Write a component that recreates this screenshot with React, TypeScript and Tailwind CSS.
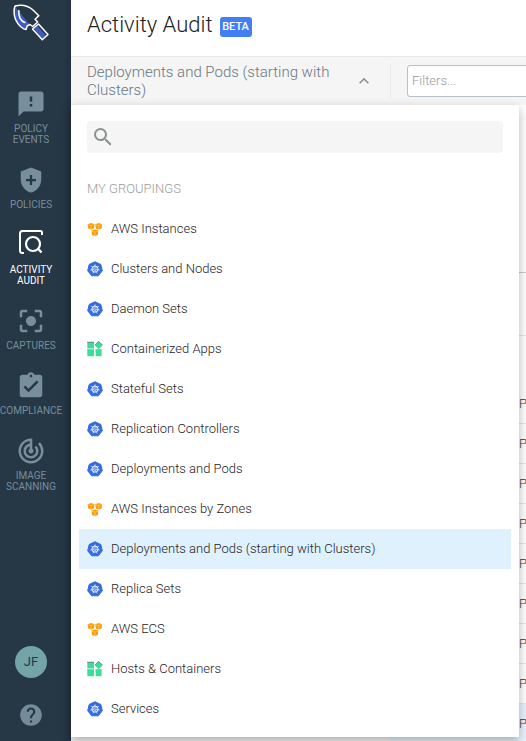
import type { ReactNode } from "react";
import {
  MdSmsFailed,
  MdCenterFocusStrong,
  MdAssignmentTurnedIn,
  MdTrackChanges,
  MdHelp,
  MdSearch,
  MdKeyboardArrowUp,
} from "react-icons/md";

function Shovel() {
  return (
    <svg width="38" height="38" viewBox="0 0 38 38" fill="none">
      <path d="M3 2.500L18 21L15.300 21.700L14 25.500L8.700 23.200L3 16L2 7.700Z" fill="#3f5bc0" />
      <path d="M6.800 6.700C6.600 12.500 8.500 16.800 12.800 18.500" stroke="#fff" strokeWidth="1.600" strokeLinecap="round" />
      <path d="M22 24.500L25 21.500L34 31.500L30.500 35.500Z" fill="#3f5bc0" />
      <path d="M3 2C10 .3 17 2.500 21 6L26.800 11.700L23 15.300L25.700 18L20.700 22.500L18 20.500L15.300 21.700L14 25.500C9 24.500 1 17 2.200 5Z" stroke="#fff" strokeWidth="1.500" strokeLinejoin="round" />
      <path d="M20.500 25L26.500 20L36 30.500L30.300 35.700Z" stroke="#fff" strokeWidth="1.500" strokeLinejoin="round" />
    </svg>
  );
}

function ShieldPlus() {
  return (
    <svg width="30" height="30" viewBox="0 0 24 24">
      <path fill="currentColor" fillRule="evenodd" d="M12 2L3.800 5.200V11.500C3.800 16.500 7.300 20.800 12 22C16.700 20.800 20.200 16.500 20.200 11.500V5.200ZM11.100 8V11.100H8V12.900H11.100V16H12.900V12.900H16V11.100H12.900V8Z" />
    </svg>
  );
}

function AuditIcon() {
  return (
    <svg width="30" height="30" viewBox="0 0 30 30" fill="none" stroke="currentColor" className="-mt-[6px]">
      <path d="M26 8V5.500Q26 4 24.500 4H6.500Q4 4 4 6.500V23.500Q4 26 6.500 26H8" strokeWidth="2" />
      <circle cx="17" cy="17" r="7" strokeWidth="2.200" />
      <path d="M21.800 21.500L25.500 25.500" strokeWidth="2.400" />
    </svg>
  );
}

function Kubernetes() {
  return (
    <svg width="16" height="16" viewBox="0 0 16 16" fill="none">
      <path d="M8 .7L13.800 3.500L15.300 9.700L11.300 14.800H4.700L.7 9.700L2.200 3.500Z" fill="#326ce5" stroke="#326ce5" strokeLinejoin="round" />
      <circle cx="8" cy="8.100" r="3.100" stroke="#fff" strokeWidth=".9" />
      <path d="M8 8.100V3.300M8 8.100L11.800 5.100M8 8.100L12.700 9.200M8 8.100L10.100 12.400M8 8.100L5.900 12.400M8 8.100L3.300 9.200M8 8.100L4.200 5.100" stroke="#fff" strokeWidth=".7" />
      <circle cx="8" cy="8.100" r=".8" fill="#326ce5" />
    </svg>
  );
}

function Cube({ x, y }: { x: number; y: number }) {
  return (
    <g transform={`translate(${x} ${y})`}>
      <path d="M0 1.200L3.500 0L7 1.200L6.300 5.500L3.500 6.400L.7 5.500Z" fill="#f90" />
      <path d="M.3 1.700L3.500 2.500L6.700 1.700M3.500 2.600V6.200" stroke="#ffdca0" strokeWidth=".6" />
    </g>
  );
}

function Aws() {
  return (
    <svg width="16" height="16" viewBox="0 0 16 16" fill="none">
      <Cube x={0.6} y={2} />
      <Cube x={8.2} y={2} />
      <Cube x={4.4} y={8.6} />
    </svg>
  );
}

function Containers() {
  return (
    <svg width="16" height="16" viewBox="0 0 16 16">
      <path fill="#66736e" d="M.3 .8H7V2H.3ZM.3 8.400H7V9.500H.3ZM8.600 8.400H14.600V9.500H8.600ZM7.600 4L11.700 0L15.800 4Z" />
      <path fill="#3ddc97" d="M.3 1.400H7V7.500H.3ZM.3 9H7V15.300H.3ZM8.600 9H14.600V15.300H8.600ZM11.700 .7L15.600 4.400L11.700 8.200L7.800 4.400Z" />
    </svg>
  );
}

const nav: { lines: string[]; icon: ReactNode; active?: boolean }[] = [
  { lines: ["POLICY", "EVENTS"], icon: <MdSmsFailed size={30} /> },
  { lines: ["POLICIES"], icon: <ShieldPlus /> },
  { lines: ["ACTIVITY", "AUDIT"], icon: <AuditIcon />, active: true },
  { lines: ["CAPTURES"], icon: <MdCenterFocusStrong size={30} /> },
  { lines: ["COMPLIANCE"], icon: <MdAssignmentTurnedIn size={30} /> },
  { lines: ["IMAGE", "SCANNING"], icon: <MdTrackChanges size={30} /> },
];

const groupings: [string, ReactNode][] = [
  ["AWS Instances", <Aws />],
  ["Clusters and Nodes", <Kubernetes />],
  ["Daemon Sets", <Kubernetes />],
  ["Containerized Apps", <Containers />],
  ["Stateful Sets", <Kubernetes />],
  ["Replication Controllers", <Kubernetes />],
  ["Deployments and Pods", <Kubernetes />],
  ["AWS Instances by Zones", <Aws />],
  ["Deployments and Pods (starting with Clusters)", <Kubernetes />],
  ["Replica Sets", <Kubernetes />],
  ["AWS ECS", <Aws />],
  ["Hosts & Containers", <Containers />],
  ["Services", <Kubernetes />],
];

const rows = Array.from({ length: 9 }, (_, i) => i);

function Sidebar() {
  return (
    <aside className="flex w-[71px] shrink-0 flex-col bg-linear-to-r from-[#263746] from-90% to-[#20303f] text-[#758b99]">
      <div className="h-[89px] pt-[4px] pl-[12px]"><Shovel /></div>
      <nav className="flex w-[62px] flex-1 flex-col gap-5">
        {nav.map((item) => (
          <div key={item.lines[0]} className={`flex flex-col items-center gap-1 ${item.active ? "text-white" : "text-[#788e9c]"}`}>
            <div className="flex h-[30px] items-center">{item.icon}</div>
            <div className="text-center text-[10px] leading-[11px] font-normal whitespace-nowrap">
              {item.lines.map((line) => <div key={line}>{line}</div>)}
            </div>
          </div>
        ))}
      </nav>
      <div className="flex w-[62px] flex-col items-center gap-[24px] pb-[13px]">
        <div className="flex size-8 items-center justify-center rounded-full bg-[#73a5a8] text-[13px] font-normal text-[#263746]">JF</div>
        <MdHelp size={26} />
      </div>
    </aside>
  );
}

function GroupingMenu() {
  return (
    <div className="absolute top-[105px] left-0 z-10 h-[632px] w-[448px] bg-white px-2 pt-4 shadow-[0_4px_10px_rgba(0,0,0,0.3)]">
      <div className="mx-2 flex h-8 items-center rounded bg-[#f5f5f5] pl-[4px] text-[#8c8f91]">
        <MdSearch size={24} />
      </div>
      <div className="mt-4 flex h-10 items-center px-2 text-[13px] text-[#9c9c9c]">MY GROUPINGS</div>
      <ul>
        {groupings.map(([label, icon]) => (
          <li key={label} className={`flex h-10 items-center gap-2 px-2 text-[13px] text-[#1f2326] ${label.includes("(") ? "bg-[#e0f1fe]" : ""}`}>
            {icon}
            {label}
          </li>
        ))}
      </ul>
    </div>
  );
}

export default function App() {
  return (
    <div className="flex h-[741px] w-[526px] overflow-hidden bg-white font-['Roboto',sans-serif] font-light">
      <Sidebar />
      <main className="relative flex min-w-0 flex-1 flex-col">
        <header className="flex h-[56px] shrink-0 items-center gap-[7px] pl-4 text-[#222]">
          <h1 className="-mt-[7px] text-[22px] leading-[28px]">Activity Audit</h1>
          <span className="-mt-[2px] flex h-5 w-8 items-center justify-center rounded-[3px] bg-[#427ff4] text-[11px] font-medium text-white">BETA</span>
        </header>
        <div className="flex h-[49px] shrink-0 border-t border-[#e8e8e8] bg-[#f5f5f5]">
          <div className="my-[6px] flex w-[320px] shrink-0 items-center border-r border-[#ececec] pl-4">
            <div className="w-[267px] shrink-0 text-[15px] leading-[18px] text-[#687781]">Deployments and Pods (starting with Clusters)</div>
            <MdKeyboardArrowUp size={20} className="text-[#8c9296]" />
          </div>
          <div className="mt-2 ml-4 flex h-8 w-[200px] shrink-0 items-center rounded-[3px] border border-[#b3c1cc] bg-white pl-[4px] text-[13px] text-[#999]">Filters...</div>
        </div>
        <div className="flex flex-1">
          <div className="w-[319px] bg-[#f5f5f5]" />
          <div className="flex-1">
            <div className="h-[168px] border-b border-[#c9cccf]" />
            <div className="h-[63px] border-b border-[#e6e6e6]" />
            <div className="h-[48px]" />
            {rows.map((i) => (
              <div key={i} className={`flex h-10 items-center justify-end border-b border-[#e6e6e6] text-[#303c46] ${i === 8 ? "bg-[#e7f3fe]" : ""}`}>
                <span className="w-[7px] text-[13px]">P</span>
              </div>
            ))}
          </div>
        </div>
        <GroupingMenu />
      </main>
    </div>
  );
}
